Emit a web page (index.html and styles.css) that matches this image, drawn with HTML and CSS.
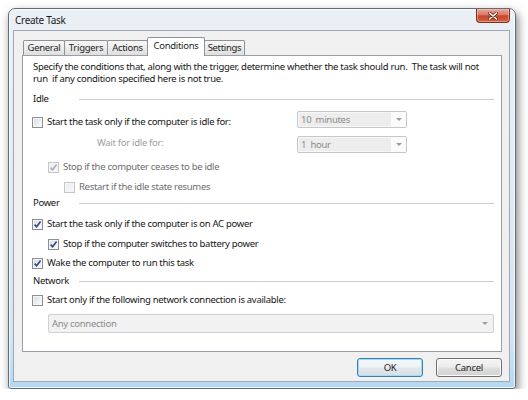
FILE: index.html
```html
<!DOCTYPE html>
<html>
<head>
<meta charset="utf-8">
<title>Create Task</title>
<link rel="stylesheet" href="styles.css">
</head>
<body>
<div class="window">
  <div class="titlebar">
    <span class="title">Create Task</span>
    <div class="close">
      <svg width="10" height="8" viewBox="0 0 10 8"><path d="M1.5 1 L8.5 7 M8.5 1 L1.5 7" stroke="#6b2418" stroke-width="3" stroke-linecap="round"/><path d="M1.5 1 L8.5 7 M8.5 1 L1.5 7" stroke="#ffffff" stroke-width="1.6" stroke-linecap="round"/></svg>
    </div>
  </div>
  <div class="client">
    <div class="tabs">
      <div class="tab w-general">General</div>
      <div class="tab w-triggers">Triggers</div>
      <div class="tab w-actions">Actions</div>
      <div class="tab active w-cond">Conditions</div>
      <div class="tab w-settings">Settings</div>
    </div>
    <div class="panel">
      <p class="desc">Specify the conditions that, along with the trigger, determine whether the task should run.&nbsp; The task will not<br>run&nbsp; if any condition specified here is not true.</p>

      <div class="section s-idle"><span class="sec-label">Idle</span><span class="rule"></span></div>

      <div class="combo-row r-idle">
        <div class="check-row lbl-off5"><span class="cb"></span><span>Start the task only if the computer is idle for:</span></div>
        <div class="combo"><span class="combo-text">10&nbsp; minutes</span><span class="combo-btn"><span class="arrow"></span></span></div>
      </div>

      <div class="combo-row r-wait">
        <div class="wait-label">Wait for idle for:</div>
        <div class="combo"><span class="combo-text">1&nbsp; hour</span><span class="combo-btn"><span class="arrow"></span></span></div>
      </div>

      <div class="check-row indent1 dim r-stop"><span class="cb checked disabled"><svg width="9" height="9" viewBox="0 0 9 9"><path d="M1.6 4.6 L3.6 6.8 L7.6 1.6" fill="none" stroke="#a9aeb6" stroke-width="1.6"/></svg></span><span>Stop if the computer ceases to be idle</span></div>

      <div class="check-row indent2 dim r-restart"><span class="cb disabled"></span><span>Restart if the idle state resumes</span></div>

      <div class="section s-power"><span class="sec-label">Power</span><span class="rule"></span></div>

      <div class="check-row r-ac"><span class="cb checked"><svg width="9" height="9" viewBox="0 0 9 9"><path d="M1.6 4.6 L3.6 6.8 L7.6 1.6" fill="none" stroke="#2d4a8a" stroke-width="1.6"/></svg></span><span>Start the task only if the computer is on AC power</span></div>

      <div class="check-row indent1 r-battery"><span class="cb checked"><svg width="9" height="9" viewBox="0 0 9 9"><path d="M1.6 4.6 L3.6 6.8 L7.6 1.6" fill="none" stroke="#2d4a8a" stroke-width="1.6"/></svg></span><span>Stop if the computer switches to battery power</span></div>

      <div class="check-row r-wake"><span class="cb checked"><svg width="9" height="9" viewBox="0 0 9 9"><path d="M1.6 4.6 L3.6 6.8 L7.6 1.6" fill="none" stroke="#2d4a8a" stroke-width="1.6"/></svg></span><span>Wake the computer to run this task</span></div>

      <div class="section s-network"><span class="sec-label">Network</span><span class="rule"></span></div>

      <div class="check-row r-net"><span class="cb"></span><span>Start only if the following network connection is available:</span></div>

      <div class="combo wide r-conn"><span class="combo-text">Any connection</span><span class="combo-btn"><span class="arrow"></span></span></div>
    </div>
    <div class="buttons">
      <button class="btn default">OK</button>
      <button class="btn">Cancel</button>
    </div>
  </div>
</div>
</body>
</html>
```

FILE: styles.css
```css
html, body {
  margin: 0;
  padding: 0;
  background: #ffffff;
}

body {
  font-family: "Noto Sans", "Open Sans", "DejaVu Sans", sans-serif;
  font-size: 9.5px;
  letter-spacing: -0.3px;
  color: #151515;
}

.window {
  margin: 8px 0 0 8px;
  width: 508px;
  height: 381px;
  box-sizing: border-box;
  border: 1px solid #5f6c7a;
  border-radius: 7px 7px 3px 3px;
  padding: 0 5px 0 4px;
  background: linear-gradient(to bottom, #eaf0f5 0%, #e2eaf1 50%, #d2e4f2 88%, #b3d8f2 100%);
  box-shadow: 2px 4px 10px rgba(0, 0, 0, 0.5), inset 0 0 0 1px rgba(255, 255, 255, 0.75);
}

.titlebar {
  height: 21px;
  display: flex;
  align-items: center;
}

.title {
  margin-left: 2px;
  font-size: 10px;
  color: #1a1a1a;
}

.close {
  margin-left: auto;
  margin-right: 0;
  align-self: flex-start;
  width: 34px;
  height: 14px;
  box-sizing: border-box;
  border: 1px solid #7c2e22;
  border-top: none;
  border-radius: 0 0 4px 4px;
  background: linear-gradient(to bottom, #e9a896 0%, #d97a66 45%, #c4452d 52%, #d2633f 100%);
  box-shadow: inset 0 0 0 1px rgba(255, 200, 190, 0.5);
  display: flex;
  align-items: center;
  justify-content: center;
}

.client {
  width: 497px;
  height: 352px;
  box-sizing: border-box;
  border: 1px solid #9ea9b5;
  background: #f0f0f0;
  padding: 6px 7px 0 8px;
}

.tabs {
  display: flex;
  align-items: flex-end;
  height: 18px;
  margin-left: 1px;
}

.tab {
  height: 15px;
  box-sizing: border-box;
  margin-left: -1px;
  border: 1px solid #8d9199;
  border-bottom: none;
  border-radius: 2px 2px 0 0;
  background: linear-gradient(to bottom, #f7f7f7 0%, #ececec 50%, #dedede 100%);
  text-align: center;
  line-height: 13px;
  color: #1e1e1e;
}

.tab:first-child {
  margin-left: 0;
}

.tab.active {
  position: relative;
  z-index: 1;
  height: 19px;
  margin-bottom: -1px;
  background: #ffffff;
  line-height: 15px;
}

.w-general { width: 42px; }
.w-triggers { width: 44px; }
.w-actions { width: 41px; }
.w-cond { width: 58px; }
.w-settings { width: 41px; }

.panel {
  height: 297px;
  box-sizing: border-box;
  border: 1px solid #9a9ea6;
  background: #ffffff;
  padding: 5px 7px 0 9px;
  display: flex;
  flex-direction: column;
}

.desc {
  margin: 0 0 0 1px;
  line-height: 12px;
  white-space: nowrap;
}

.section {
  display: flex;
  align-items: center;
  gap: 7px;
  height: 12px;
  line-height: 12px;
  margin-left: 1px;
}

.sec-label {
  min-width: 39px;
}

.rule {
  flex: 1;
  height: 1px;
  background: #c9cdd2;
}

.s-idle { margin-top: 8px; }
.s-power { margin-top: 4px; }
.s-network { margin-top: 6px; }

.check-row {
  display: flex;
  align-items: center;
  gap: 4px;
  height: 12px;
  line-height: 12px;
  white-space: nowrap;
}

.indent1 { margin-left: 16px; }
.indent2 { margin-left: 32px; }

.dim { color: #6d6d6d; }

.cb {
  flex: none;
  width: 11px;
  height: 11px;
  box-sizing: border-box;
  border: 1px solid #8b8e92;
  background: linear-gradient(135deg, #d6dae0 0%, #eef0f2 60%, #fbfbfb 100%);
  box-shadow: inset 0 0 0 1px #f6f6f6;
  display: flex;
  align-items: center;
  justify-content: center;
}

.cb svg {
  display: block;
}

.cb.disabled {
  border-color: #c4c6c9;
  background: linear-gradient(135deg, #eceef0 0%, #f6f7f8 100%);
}

.combo-row {
  display: grid;
  grid-template-columns: 265px 110px;
  align-items: start;
}

.lbl-off5 { margin-top: 5px; }

.r-idle { margin-top: 6px; }
.r-wait { margin-top: 8px; }
.r-stop { margin-top: 8px; }
.r-restart { margin-top: 8px; }
.r-ac { margin-top: 9px; }
.r-battery { margin-top: 8px; }
.r-wake { margin-top: 7px; }
.r-net { margin-top: 7px; }
.r-conn { margin-top: 8px; }

.wait-label {
  margin: 1px 0 0 65px;
  line-height: 12px;
  color: #a0a0a0;
}

.combo {
  height: 17px;
  box-sizing: border-box;
  border: 1px solid #c5c7ca;
  border-radius: 2px;
  background: #f7f7f7;
  display: flex;
  align-items: stretch;
  color: #8a8a8a;
}

.combo-text {
  flex: 1;
  background: #ededed;
  margin: 1px 0 1px 1px;
  padding-left: 2px;
  line-height: 13px;
}

.combo-btn {
  width: 15px;
  display: flex;
  align-items: center;
  justify-content: center;
  background: #fbfbfb;
}

.arrow {
  width: 0;
  height: 0;
  border-left: 3px solid transparent;
  border-right: 3px solid transparent;
  border-top: 3px solid #9c9c9c;
}

.combo.wide {
  height: 19px;
  margin-left: 16px;
  background: #f2f2f2;
  border-color: #cfd0d2;
}

.combo.wide .combo-text {
  background: transparent;
  line-height: 15px;
}

.combo.wide .combo-btn {
  background: transparent;
  width: 16px;
}

.buttons {
  display: flex;
  justify-content: flex-end;
  gap: 13px;
  margin-top: 6px;
}

.btn {
  width: 66px;
  height: 19px;
  box-sizing: border-box;
  padding: 0;
  border: 1px solid #707070;
  border-radius: 3px;
  background: linear-gradient(to bottom, #f4f4f4 0%, #ececec 48%, #dfdfdf 52%, #d2d2d2 100%);
  box-shadow: inset 0 0 0 1px #fbfbfb;
  font-family: "Noto Sans", "Open Sans", "DejaVu Sans", sans-serif;
  font-size: 9.5px;
  letter-spacing: -0.3px;
  color: #1e1e1e;
  line-height: 15px;
}

.btn.default {
  border-color: #3c7fb1;
  box-shadow: inset 0 0 0 1px #9fdcf8;
  background: linear-gradient(to bottom, #f6f8fa 0%, #eef2f4 48%, #e2e8ec 52%, #d6dde2 100%);
}
```
